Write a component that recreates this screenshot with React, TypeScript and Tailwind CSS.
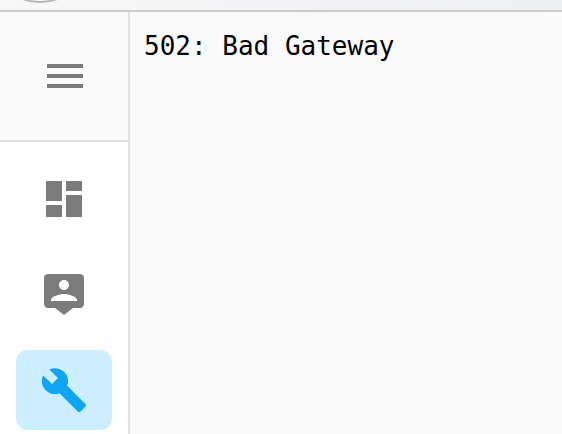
const NavIcon = ({ d, className }: { d: string; className: string }) => (
    <svg viewBox="0 0 24 24" className={`w-12 h-12 ${className}`} fill="currentColor" fillRule="evenodd">
        <path d={d} />
    </svg>
);

const menuPath = "M3 18h18v-2H3v2zm0-5h18v-2H3v2zm0-7v2h18V6H3z";
const dashboardPath = "M3 13h8V3H3v10zm0 8h8v-6H3v6zm10 0h8V10h-8v11zm0-18v5h8V3h-8z";
const contactPath = "M20 1.500H4c-1.100 0-2 .9-2 2v13c0 1.100.9 2 2 2h3.500L12 22l4.500-3.500H20c1.100 0 2-.9 2-2v-13c0-1.100-.9-2-2-2zM12 4.500c1.380 0 2.500 1.120 2.500 2.500S13.380 9.500 12 9.500 9.500 8.380 9.500 7 10.620 4.500 12 4.500zM18.500 15h-13v-.5c0-1.800 4.300-3 6.500-3s6.500 1.200 6.500 3v.5z";
const buildPath = "M22.7 19l-9.100-9.100c.9-2.300.4-5-1.500-6.900-2-2-5-2.400-7.400-1.300L9 6 6 9 1.600 4.700C.4 7.100.9 10.100 2.900 12.100c1.900 1.900 4.600 2.400 6.900 1.500l9.100 9.100c.4.4 1 .4 1.400 0l2.300-2.300c.5-.4.5-1.100.1-1.400z";

export default function App() {
    return (
        <div className="flex flex-col h-[434px] w-[562px] overflow-hidden bg-[#fafafa]">
            {/* browser strip, avatar is cut off by the top edge */}
            <div className="relative h-3 shrink-0 overflow-hidden bg-linear-to-r from-[#f8f8f9] to-[#eeeff1] border-b-2 border-[#cccccc]">
                <div className="absolute left-[-10px] top-[-97px] w-[100px] h-[100px] rounded-full border-2 border-[#b5b5b5] bg-[#f8f8f9]" />
            </div>
            <div className="flex flex-1 min-h-0">
                <aside className="w-[130px] shrink-0 flex flex-col bg-white border-r-2 border-[#e0e0e0]">
                    <div className="h-[130px] shrink-0 flex items-center justify-center pl-[2px] bg-[#fafafa] border-b-2 border-[#e0e0e0]">
                        <NavIcon d={menuPath} className="text-[#7b7b7b]" />
                    </div>
                    <div className="flex flex-col items-center pt-[33px] gap-[48px]">
                        <NavIcon d={dashboardPath} className="text-[#7b7b7b]" />
                        <NavIcon d={contactPath} className="text-[#7b7b7b]" />
                    </div>
                    <div className="mx-4 mt-[31px] h-20 w-24 rounded-xl bg-[#cceeff] flex items-center justify-center">
                        <NavIcon d={buildPath} className="text-[#0ea5f5]" />
                    </div>
                </aside>
                <main className="flex-1 pl-[14px] pt-[14px]">
                    <p className="text-[26px] leading-[40px] text-black font-['DejaVu_Sans_Mono',monospace]">502: Bad Gateway</p>
                </main>
            </div>
        </div>
    );
}
